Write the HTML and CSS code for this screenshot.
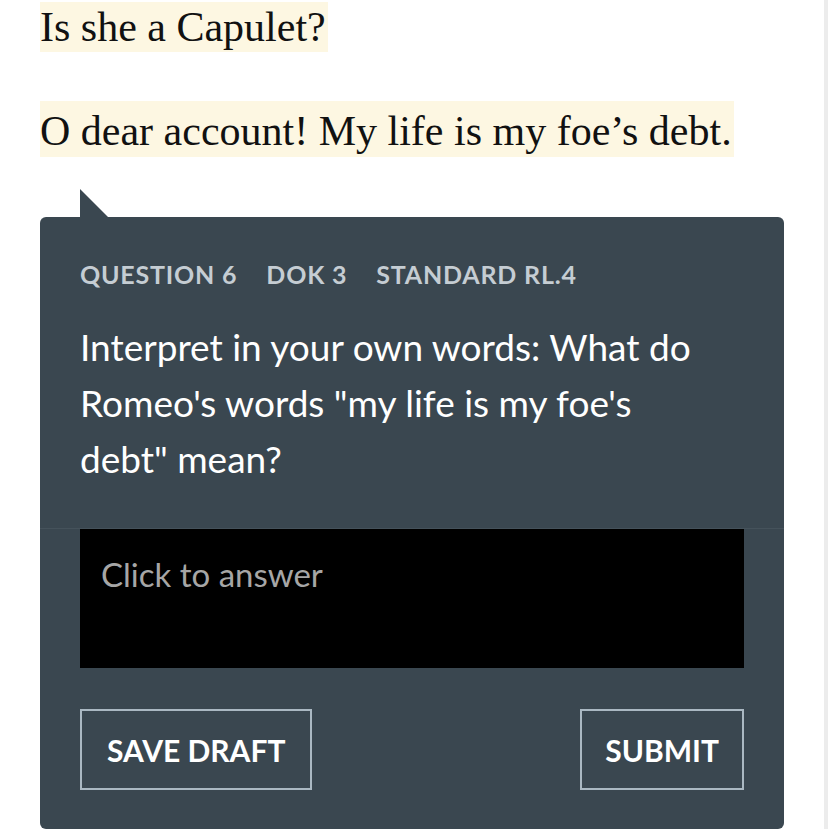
FILE: index.html
```html
<!DOCTYPE html>
<html lang="en">
<head>
<meta charset="utf-8">
<title>Question 6</title>
<link rel="stylesheet" href="styles.css">
</head>
<body>
<div class="page">
  <div class="passage">
    <p class="verse first"><span class="hl">Is she a Capulet?</span></p>
    <p class="verse second"><span class="hl">O dear account! My life is my foe’s debt.</span></p>
  </div>
  <div class="tail"></div>
  <section class="card">
    <div class="question">
      <div class="meta">
        <span>QUESTION 6</span>
        <span>DOK 3</span>
        <span>STANDARD RL.4</span>
      </div>
      <p class="prompt">Interpret in your own words: What do Romeo's words "my life is my foe's debt" mean?</p>
    </div>
    <div class="answer-wrap">
      <div class="answer">Click to answer</div>
    </div>
    <div class="actions">
      <button class="btn">SAVE DRAFT</button>
      <button class="btn btn-submit">SUBMIT</button>
    </div>
  </section>
</div>
<div class="scrolltrack"></div>
</body>
</html>
```
FILE: styles.css
```css
html, body {
  margin: 0;
  padding: 0;
  background: #ffffff;
}
body {
  overflow: hidden;
  height: 829px;
}
.page {
  padding-left: 40px;
  padding-right: 44px;
}
.passage {
  font-family: "Liberation Serif", "DejaVu Serif", serif;
  color: #111111;
}
.verse {
  margin: 0;
}
.hl {
  display: inline-block;
  background: #fdf7e2;
  font-size: 42px;
}
.first {
  padding-top: 2px;
}
.first .hl {
  height: 50px;
  line-height: 50px;
  padding-right: 2px;
}
.second {
  margin-top: 49px;
}
.second .hl {
  height: 56px;
  line-height: 60px;
  padding-right: 2px;
}
.tail {
  margin-top: 32px;
  margin-left: 40px;
  width: 0;
  height: 0;
  border-top: 28px solid transparent;
  border-left: 28px solid #3a4750;
}
.card {
  background: #3a4750;
  border-radius: 6px;
  font-family: "Lato", "Open Sans", sans-serif;
  color: #ffffff;
  padding-bottom: 39px;
}
.question {
  padding: 39px 40px 41px;
  border-bottom: 1px solid #45525b;
}
.meta {
  display: flex;
  gap: 29px;
  font-size: 25px;
  line-height: 36px;
  font-weight: 700;
  letter-spacing: 0.8px;
  color: #c5cdd3;
}
.prompt {
  margin: 27px 0 0;
  max-width: 630px;
  font-size: 37px;
  line-height: 56px;
  font-weight: 400;
}
.answer-wrap {
  padding: 0 40px;
}
.answer {
  background: #000000;
  height: 139px;
  box-sizing: border-box;
  padding: 25px 21px;
  font-size: 33px;
  line-height: 40px;
  color: #a6a6a6;
  font-weight: 400;
}
.actions {
  display: flex;
  justify-content: space-between;
  padding: 41px 40px 0;
}
.btn {
  background: transparent;
  border: 2px solid #aab8c2;
  color: #ffffff;
  font-family: "Lato", "Open Sans", sans-serif;
  font-size: 30px;
  font-weight: 700;
  height: 81px;
  padding: 0 25px;
  letter-spacing: 0;
}
.btn-submit {
  padding: 0 23px;
}
.scrolltrack {
  position: fixed;
  top: 0;
  right: 0;
  width: 4px;
  height: 100%;
  background: #ececec;
}
```
